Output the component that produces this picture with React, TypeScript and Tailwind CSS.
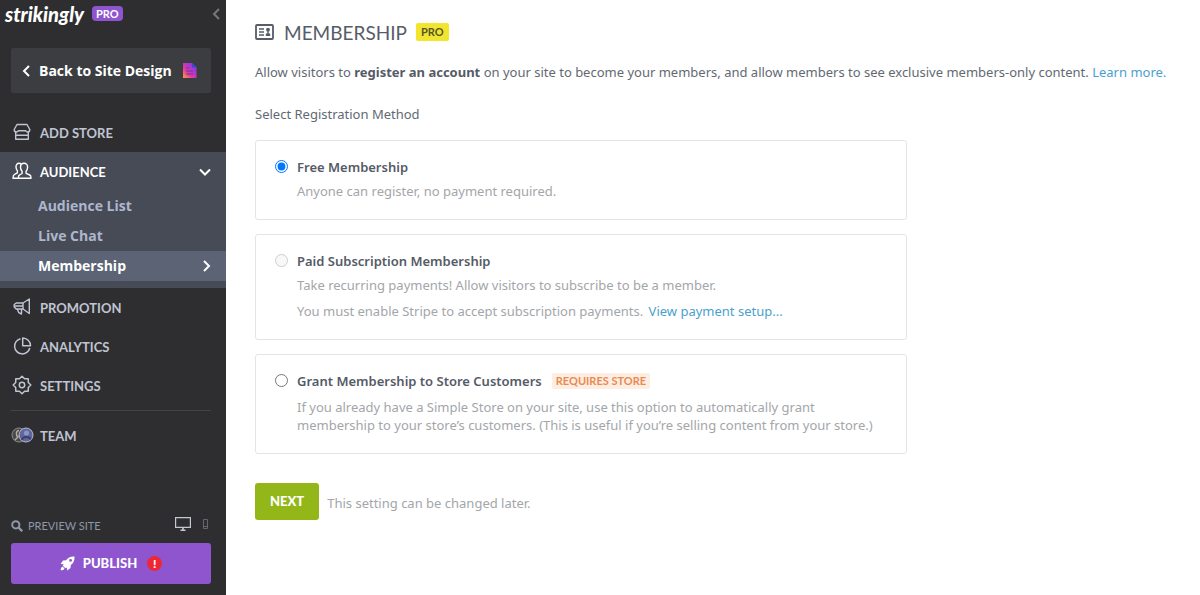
import { useState } from "react";
import type { ReactNode } from "react";

type Method = "free" | "paid" | "store";

function StoreIcon() {
  return (
    <svg width="18" height="18" viewBox="0 0 18 18" fill="none" stroke="currentColor" strokeWidth="1.4" strokeLinejoin="round">
      <path d="M4 1.500h10l2.800 5c0 1.800-1 2.500-2.100 2.500-1.100 0-1.700-.5-2-1.200H5.300C5 8.500 4.400 9 3.300 9 2.200 9 1.200 8.300 1.200 6.500z" />
      <path d="M2.700 9v7.300h12.600V9M2.700 12.200h12.600" />
    </svg>
  );
}

function AudienceIcon() {
  return (
    <svg width="20" height="18" viewBox="0 0 20 18" fill="none" stroke="currentColor" strokeWidth="1.400" strokeLinejoin="round">
      <path d="M12 1.200c2.300 0 3.700 1.700 3.600 4.100-.1 1.700-.7 3-1.500 3.900v2.100l3.700 1.700c.9.400 1.200 1.300 1.200 3.200H6.300c0-1.900.3-2.800 1.200-3.200l2.600-1.500V9.200C9.200 8.300 8.500 7 8.500 5.300c0-2.400 1.300-4.100 3.500-4.100z" />
      <path d="M9.200 2.200C8.600 1.500 7.900 1.200 7.100 1.200 5 1.200 3.900 2.900 4 5c0 1.500.6 2.800 1.400 3.700v2.200l-2.800 1.500C1.400 13 1 14.200 1 16.200h5.300" />
    </svg>
  );
}

function PromotionIcon() {
  return (
    <svg width="18" height="18" viewBox="0 0 18 18" fill="none" stroke="currentColor" strokeWidth="1.400" strokeLinejoin="round">
      <path d="M16.300 1v14.500L10 11H3.200L1.200 9V6.500L3.200 5H10z" />
      <path d="M10 5v6M1.200 8H10M4.300 11l1.500 3.700L8.500 16v-5" />
    </svg>
  );
}

function AnalyticsIcon() {
  return (
    <svg width="19" height="18" viewBox="0 0 19 18" fill="none" stroke="currentColor" strokeWidth="1.500" strokeLinejoin="round">
      <path d="M7.500 1.700A7.700 7.700 0 1 0 16.800 11" />
      <path d="M9.700 1v7.800h7.800C17.500 4.500 14 1 9.700 1z" />
    </svg>
  );
}

function SettingsIcon() {
  return (
    <svg width="20" height="20" viewBox="0 0 20 20" fill="none" stroke="currentColor" strokeWidth="1.500" strokeLinejoin="round">
      <path d="M10 1.200 12.600 3.700 16.200 3.800 16.300 7.400 18.800 10 16.300 12.600 16.200 16.200 12.600 16.300 10 18.800 7.400 16.300 3.800 16.200 3.700 12.600 1.200 10 3.700 7.400 3.800 3.800 7.400 3.700z" />
      <circle cx="10" cy="10" r="2.700" />
    </svg>
  );
}

function TeamIcon() {
  return (
    <svg width="23" height="16" viewBox="0 0 23 16" fill="none">
      <circle cx="8" cy="8" r="7" fill="#4a4747" stroke="#8b8c92" />
      <path d="M8 3.500c-3 0-3.500 5-1 6.500l-3 3" stroke="#b5aaa0" strokeWidth="1.500" />
      <circle cx="15" cy="8" r="7" fill="#5f67a0" stroke="#b9bcc8" />
      <circle cx="15.500" cy="6" r="2.600" fill="#8d93c4" />
      <path d="M11 13c.5-4 8-4 8.500-.5" stroke="#3c416b" strokeWidth="2" />
    </svg>
  );
}

function PageIcon() {
  return (
    <svg width="15" height="16" viewBox="0 0 15 16">
      <defs>
        <linearGradient id="page" x1="0" y1="1" x2="1" y2="0">
          <stop offset="0" stopColor="#f9a13c" />
          <stop offset="0.350" stopColor="#e23c9a" />
          <stop offset="0.700" stopColor="#a335d8" />
          <stop offset="1" stopColor="#5550e8" />
        </linearGradient>
      </defs>
      <path d="M1 0h9l4.500 4.500V15H1z" fill="url(#page)" />
      <path d="M10 0v4.500h4.500z" fill="#3b48c8" />
      <path d="M4 5h3M4 8h7M4 11h7" stroke="#6f35a8" strokeWidth="1.200" />
    </svg>
  );
}

function Chevron({ d }: { d: string }) {
  return (
    <svg width="12" height="12" viewBox="0 0 12 12" fill="none" stroke="currentColor" strokeWidth="2">
      <path d={d} />
    </svg>
  );
}

function NavItem({ icon, label, active, children }: { icon: ReactNode; label: string; active?: boolean; children?: ReactNode }) {
  return (
    <a
      href="#"
      className={`flex h-[39px] items-center pr-[15px] pl-[10px] font-[Lato,sans-serif] text-[13px] font-bold ${
        active ? "text-white" : "text-[#c0c4d3]"
      }`}
    >
      <span className="flex w-6 shrink-0 justify-center pb-[2px]">{icon}</span>
      <span className="ml-[6px] flex-1 pt-[3px]">{label}</span>
      {children}
    </a>
  );
}

const subItems = ["Audience List", "Live Chat", "Membership"];

function Sidebar() {
  return (
    <aside className="flex min-h-screen w-[226px] shrink-0 flex-col bg-[#2e2e30]">
      <div className="flex h-[27px] items-center pr-1 pl-[5px]">
        <a href="#" className="font-[Lato,sans-serif] text-xl leading-6 font-black text-white italic">
          strikingly
        </a>
        <span className="ml-2 rounded-sm bg-[#8e55cf] px-1 font-[Lato,sans-serif] text-[11px] leading-[15px] font-bold text-white">
          PRO
        </span>
        <button aria-label="Collapse sidebar" className="ml-auto text-[#77787c]">
          <Chevron d="M9 1 4 6l5 5" />
        </button>
      </div>

      <a
        href="#"
        className="mt-[21px] mr-[15px] ml-[11px] flex h-[45px] items-center rounded-xs bg-[#3b3d41] px-[10px] text-sm font-bold text-white"
      >
        <Chevron d="M8 1 3 6l5 5" />
        <span className="ml-[6px] flex-1 whitespace-nowrap">Back to Site Design</span>
        <span className="mr-1">
          <PageIcon />
        </span>
      </a>

      <nav className="mt-5">
        <NavItem icon={<StoreIcon />} label="ADD STORE" />
        <div className="bg-[#474b56] pb-[7px]">
          <NavItem icon={<AudienceIcon />} label="AUDIENCE" active>
            <Chevron d="M1 3.500l5 5 5-5" />
          </NavItem>
          {subItems.map((item) => (
            <a
              key={item}
              href="#"
              className={`flex h-[30px] items-center justify-between pr-[14px] pl-[38px] text-sm font-bold ${
                item === "Membership" ? "bg-[#5b6374] text-white" : "text-[#aeb6ce]"
              }`}
            >
              {item}
              {item === "Membership" && <Chevron d="M4 1l5 5-5 5" />}
            </a>
          ))}
        </div>
        <NavItem icon={<PromotionIcon />} label="PROMOTION" />
        <NavItem icon={<AnalyticsIcon />} label="ANALYTICS" />
        <NavItem icon={<SettingsIcon />} label="SETTINGS" />
        <hr className="my-[5px] mr-[15px] ml-[11px] border-[#434447]" />
        <NavItem icon={<TeamIcon />} label="TEAM" />
      </nav>

      {/* Preview + publish */}
      <div className="mt-auto pr-[15px] pb-[11px] pl-[11px]">
        <div className="flex h-[34px] items-center text-[#8f97a8]">
          <a href="#" className="flex items-center gap-[5px] font-[Lato,sans-serif] text-[11px]">
            <svg width="12" height="12" viewBox="0 0 12 12" fill="none" stroke="currentColor" strokeWidth="2">
              <circle cx="4.800" cy="4.800" r="3.600" />
              <path d="M7.500 7.500l3.700 3.700" strokeWidth="2.400" />
            </svg>
            PREVIEW SITE
          </a>
          <button aria-label="Desktop preview" className="ml-auto pb-1 text-[#c3c7d2]">
            <svg width="16" height="14" viewBox="0 0 16 14" fill="none" stroke="currentColor" strokeWidth="1.200">
              <path d="M.6.6h14.800v9.800H.6z" />
              <path d="M8 10.400V13M5.500 13.200h5" strokeWidth="1.600" />
            </svg>
          </button>
          <button aria-label="Mobile preview" className="mr-[3px] ml-3 pb-1 text-[#65676c]">
            <svg width="5" height="10" viewBox="0 0 5 10" fill="none" stroke="currentColor">
              <path d="M.5.5h4v9h-4zM.5 7.500h4" />
            </svg>
          </button>
        </div>
        <button className="flex h-[41px] w-full items-center justify-center rounded-[3px] bg-[#8e55cf] font-[Lato,sans-serif] text-[13px] font-black text-white">
          <svg width="15" height="15" viewBox="0 0 15 15">
            <path
              fill="currentColor"
              fillRule="evenodd"
              d="M14.500.5C10.500.2 8 1.600 6 4.300L3 4.500.6 8l3 .2-.8 1.500 2.600 2.600 1.500-.8.2 3 3.400-2.400.3-3C13.500 7 14.800 4.500 14.500.5zM10.600 3a1.400 1.400 0 1 1 0 2.800 1.400 1.400 0 0 1 0-2.800zM2.500 10.500C1 11.200.8 12.600.7 14.300c1.700-.1 3.100-.3 3.800-1.800z"
            />
          </svg>
          <span className="ml-2 pt-px">PUBLISH</span>
          <span className="ml-[10px] flex size-[15px] items-center justify-center rounded-full bg-[#ee2737] text-xs leading-none">
            !
          </span>
        </button>
      </div>
    </aside>
  );
}

type OptionProps = {
  id: Method;
  title: string;
  badge?: string;
  selected: Method;
  disabled?: boolean;
  onSelect: (id: Method) => void;
  children: ReactNode;
};

function MethodOption({ id, title, badge, selected, disabled, onSelect, children }: OptionProps) {
  return (
    <div className="flex items-start rounded-[3px] border border-[#e2e4e7] pt-4 pr-[18px] pb-[19px] pl-[19px]">
      <input
        type="radio"
        id={id}
        name="method"
        className="mt-[3px] size-[13px] shrink-0"
        checked={selected === id}
        disabled={disabled}
        onChange={() => onSelect(id)}
      />
      <div className="ml-[9px]">
        <div className="flex items-center">
          <label htmlFor={id} className="leading-5 font-semibold text-[#555b66]">
            {title}
          </label>
          {badge && (
            <span className="ml-[10px] rounded-xs bg-[#feeee2] px-1 font-[Lato,sans-serif] text-[11px] leading-4 font-bold text-[#e88a52]">
              {badge}
            </span>
          )}
        </div>
        {children}
      </div>
    </div>
  );
}

export default function App() {
  const [method, setMethod] = useState<Method>("free");

  return (
    <div className="flex min-h-screen bg-white font-['Open_Sans',sans-serif] text-[13px] text-[#636972]">
      <Sidebar />

      <main className="min-w-0 flex-1 pt-5 pl-[29px] font-['Noto_Sans','Open_Sans',sans-serif]">
        {/* Title */}
        <div className="flex h-6 items-center">
          <svg width="19" height="16" viewBox="0 0 19 16" fill="none" stroke="#565c68" className="shrink-0">
            <rect x="1" y="1" width="17" height="14" rx="1" strokeWidth="1.800" />
            <path d="M4 5h5M4 8h5M4 11h5" strokeWidth="1.400" />
            <circle cx="13" cy="5.700" r="1.900" fill="#565c68" stroke="none" />
            <path d="M12.300 7h1.400v2.200l1.500.6V12h-4.400V9.800l1.500-.6z" fill="#565c68" stroke="none" />
          </svg>
          <h1 className="ml-[10px] pt-px font-[Lato,sans-serif] text-[19px] leading-6 text-[#565c68]">MEMBERSHIP</h1>
          <span className="ml-[9px] rounded-xs bg-[#f2e530] px-[5px] font-[Lato,sans-serif] text-[11px] leading-[18px] font-bold text-[#55552c]">
            PRO
          </span>
        </div>

        <p className="mt-[18px] leading-5">
          Allow visitors to <strong className="font-bold text-[#555b66]">register an account</strong> on your site to become
          your members, and allow members to see exclusive members-only content.{" "}
          <a href="#" className="text-[#4a9fce]">Learn more.</a>
        </p>

        {/* Registration methods */}
        <fieldset className="mt-[22px] max-w-[652px]">
          <legend className="leading-5">Select Registration Method</legend>
          <div className="mt-4 flex flex-col gap-[14px] text-[#a3a6aa]">
            <MethodOption id="free" title="Free Membership" selected={method} onSelect={setMethod}>
              <p className="mt-[5px] leading-[18px]">Anyone can register, no payment required.</p>
            </MethodOption>
            <MethodOption id="paid" title="Paid Subscription Membership" selected={method} disabled onSelect={setMethod}>
              <p className="mt-[5px] leading-[18px]">Take recurring payments! Allow visitors to subscribe to be a member.</p>
              <p className="mt-2 leading-[18px]">
                You must enable Stripe to accept subscription payments.{" "}
                <a href="#" className="ml-[2px] text-[#4a9fce]">View payment setup...</a>
              </p>
            </MethodOption>
            <MethodOption
              id="store"
              title="Grant Membership to Store Customers"
              badge="REQUIRES STORE"
              selected={method}
              onSelect={setMethod}
            >
              <p className="mt-[7px] leading-[18px]">
                If you already have a Simple Store on your site, use this option to automatically grant
                <br />
                membership to your store’s customers. (This is useful if you’re selling content from your store.)
              </p>
            </MethodOption>
          </div>
        </fieldset>

        <div className="mt-[29px] flex items-center gap-2">
          <button className="h-[37px] rounded-[3px] bg-[#93b719] px-[15px] font-[Lato,sans-serif] font-black text-white">NEXT</button>
          <span className="pt-1 text-[#a3a6aa]">This setting can be changed later.</span>
        </div>
      </main>
    </div>
  );
}
